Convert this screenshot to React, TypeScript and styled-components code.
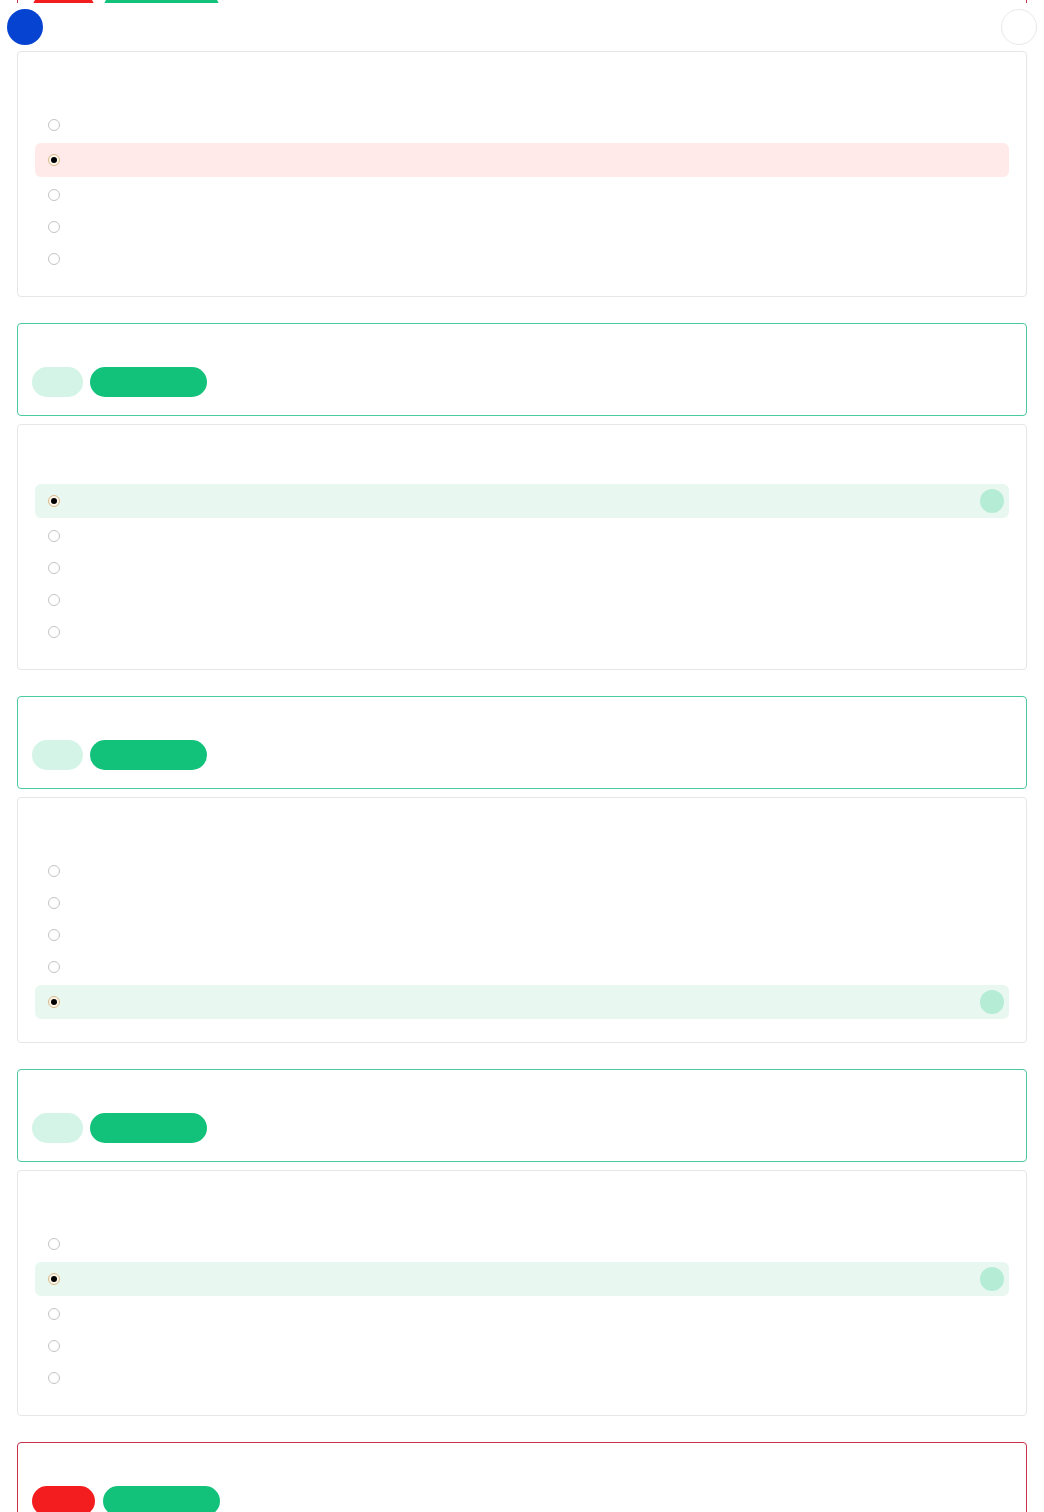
import React from 'react';
import styled, {createGlobalStyle} from 'styled-components';

const GlobalStyle = createGlobalStyle`
  html, body {
    margin: 0;
    padding: 0;
    background: #ffffff;
    font-family: Inter, "Noto Sans", sans-serif;
  }
`;

const Header = styled.div`
  position: fixed;
  top: 3px;
  left: 0;
  right: 0;
  z-index: 10;
  height: 48px;
  box-sizing: border-box;
  padding: 6px 7px;
  display: flex;
  justify-content: space-between;
  align-items: flex-start;
  background-color: #ffffff;
`;

type CircleButtonPropsType = {
    $filled?: boolean
}

const CircleButton = styled.div<CircleButtonPropsType>`
  width: 36px;
  height: 36px;
  box-sizing: border-box;
  border-radius: 50%;
  background-color: ${props => props.$filled ? '#0643d0' : '#ffffff'};
  border: ${props => props.$filled ? 'none' : '1px solid #e6e8eb'};
`;

const Page = styled.div`
  display: flex;
  flex-direction: column;
  gap: 26px;
  padding: 0 17px 40px;
  margin-top: -50px;
`;

const Block = styled.div`
  display: flex;
  flex-direction: column;
  gap: 8px;
`;

type ResultCardPropsType = {
    $correct: boolean
}

const ResultBox = styled.div<ResultCardPropsType>`
  padding: 14px 14px 18px;
  border: 1px solid ${props => props.$correct ? '#4cc9a0' : '#c9304a'};
  border-radius: 4px;
  background-color: #ffffff;
`;

const ResultTitle = styled.div`
  height: 29px;
`;

const PillRow = styled.div<ResultCardPropsType>`
  display: flex;
  gap: ${props => props.$correct ? '7px' : '8px'};
`;

type PillPropsType = {
    $kind: 'mint' | 'green' | 'red'
}

const pillColors = {
  mint: '#d3f4e6',
  green: '#12c27a',
  red: '#f31c1f',
};

const pillWidths = {
  mint: '51px',
  green: '117px',
  red: '63px',
};

const Pill = styled.div<PillPropsType>`
  width: ${props => pillWidths[props.$kind]};
  height: 30px;
  border-radius: 15px;
  background-color: ${props => pillColors[props.$kind]};
`;

const QuestionBox = styled.div`
  padding: 16px 17px 21px;
  border: 1px solid #e6e6e6;
  border-radius: 4px;
  background-color: #ffffff;
`;

const QuestionTitle = styled.div`
  height: 41px;
`;

const OptionList = styled.div`
  display: flex;
  flex-direction: column;
`;

type OptionRowPropsType = {
    $state: 'plain' | 'wrong' | 'right'
}

const OptionRow = styled.div<OptionRowPropsType>`
  display: flex;
  justify-content: space-between;
  align-items: center;
  height: ${props => props.$state === 'plain' ? '32px' : '34px'};
  margin: ${props => props.$state === 'plain' ? '0' : '2px 0'};
  padding: 0 5px 0 13px;
  border-radius: 6px;
  background-color: ${props => props.$state === 'wrong' ? '#ffe9e9' : props.$state === 'right' ? '#e8f8f0' : 'transparent'};
`;

type RadioPropsType = {
    $checked: boolean
}

const Radio = styled.span<RadioPropsType>`
  display: flex;
  justify-content: center;
  align-items: center;
  width: 12px;
  height: 12px;
  box-sizing: border-box;
  border-radius: 50%;
  border: 1px solid ${props => props.$checked ? '#d8b98a' : '#c4c4c4'};
  background-color: ${props => props.$checked ? '#fdf6ea' : '#ffffff'};

  &::after {
    content: '';
    display: ${props => props.$checked ? 'block' : 'none'};
    width: 6px;
    height: 6px;
    border-radius: 50%;
    background-color: #000000;
  }
`;

const CorrectMark = styled.span`
  width: 24px;
  height: 24px;
  border-radius: 50%;
  background-color: #b5ecd6;
`;

type QuestionType = {
    correct: boolean
    selected: number
}

type BlockType = {
    correct: boolean
    question?: QuestionType
}

const blocks: Array<BlockType> = [
  {correct: false, question: {correct: false, selected: 1}},
  {correct: true, question: {correct: true, selected: 0}},
  {correct: true, question: {correct: true, selected: 4}},
  {correct: true, question: {correct: true, selected: 1}},
  {correct: false},
];

const ResultCard = ({correct}: {correct: boolean}) =>
  <ResultBox $correct={correct}>
    <ResultTitle/>
    <PillRow $correct={correct}>
      <Pill $kind={correct ? 'mint' : 'red'}/>
      <Pill $kind="green"/>
    </PillRow>
  </ResultBox>;

const QuestionCard = ({question}: {question: QuestionType}) =>
  <QuestionBox>
    <QuestionTitle/>
    <OptionList>
      {[0, 1, 2, 3, 4].map(index => {
        const isSelected = index === question.selected;
        const state = !isSelected ? 'plain' : question.correct ? 'right' : 'wrong';
        return <OptionRow key={index} $state={state}>
          <Radio $checked={isSelected}/>
          {state === 'right' && <CorrectMark/>}
        </OptionRow>;
      })}
    </OptionList>
  </QuestionBox>;

export default function App() {
  return <>
    <GlobalStyle/>
    <Header>
      <CircleButton $filled/>
      <CircleButton/>
    </Header>
    <Page>
      {blocks.map((block, index) =>
        <Block key={index}>
          <ResultCard correct={block.correct}/>
          {block.question && <QuestionCard question={block.question}/>}
        </Block>)}
    </Page>
  </>;
}
